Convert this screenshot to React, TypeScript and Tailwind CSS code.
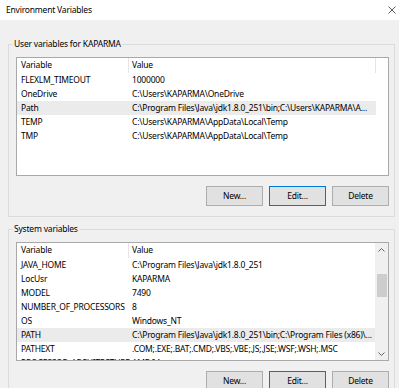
import React from "react";

type Row = [string, string];

const userVars: Row[] = [
  ["FLEXLM_TIMEOUT", "1000000"],
  ["OneDrive", "C:\\Users\\KAPARMA\\OneDrive"],
  ["Path", "C:\\Program Files\\Java\\jdk1.8.0_251\\bin;C:\\Users\\KAPARMA\\A..."],
  ["TEMP", "C:\\Users\\KAPARMA\\AppData\\Local\\Temp"],
  ["TMP", "C:\\Users\\KAPARMA\\AppData\\Local\\Temp"],
];

const systemVars: Row[] = [
  ["JAVA_HOME", "C:\\Program Files\\Java\\jdk1.8.0_251"],
  ["LocUsr", "KAPARMA"],
  ["MODEL", "7490"],
  ["NUMBER_OF_PROCESSORS", "8"],
  ["OS", "Windows_NT"],
  ["PATH", "C:\\Program Files\\Java\\jdk1.8.0_251\\bin;C:\\Program Files (x86)\\..."],
  ["PATHEXT", ".COM;.EXE;.BAT;.CMD;.VBS;.VBE;.JS;.JSE;.WSF;.WSH;.MSC"],
  ["PROCESSOR_ARCHITECTURE", "AMD64"],
];

function Buttons() {
  return (
    <div className="flex justify-end gap-[6px] pr-[5px] mt-[10px]">
      <button className="w-[57px] h-[20px] bg-[#e1e1e1] border border-[#adadad] leading-none">New...</button>
      <button className="w-[57px] h-[20px] bg-[#e1e1e1] border border-[#0078d7] leading-none">Edit...</button>
      <button className="w-[57px] h-[20px] bg-[#e1e1e1] border border-[#adadad] leading-none">Delete</button>
    </div>
  );
}

function VarList({ rows, selected, scroll }: { rows: Row[]; selected: number; scroll?: boolean }) {
  return (
    <div className="flex w-[373px] h-[119px] border border-[#a9a9a9] bg-white overflow-hidden">
      <div className="flex-1 overflow-hidden">
        <div className="flex h-[15px] items-center">
          <div className="w-[111px] pl-[4px] shrink-0">Variable</div>
          <div className="w-px h-full bg-[#e5e5e5]" />
          <div className="flex-1 pl-[3px]">Value</div>
          {!scroll && <div className="w-px h-full bg-[#e5e5e5] mr-[12px]" />}
        </div>
        {rows.map((r, i) => (
          <div
            key={r[0]}
            className={`flex h-[14px] items-center whitespace-nowrap ${i === selected ? "bg-[#ebebeb]" : ""} ${scroll ? "" : "mr-[12px]"}`}
          >
            <div className="w-[115px] pl-[4px] shrink-0 overflow-hidden">{r[0]}</div>
            <div className="flex-1 overflow-hidden">{r[1]}</div>
          </div>
        ))}
      </div>
      {scroll && (
        <div className="w-[13px] shrink-0 bg-[#f0f0f0] flex flex-col items-center">
          <div className="h-[13px] flex items-center justify-center">
            <svg width="7" height="4" viewBox="0 0 7 4"><path d="M0.5 3.5 L3.5 0.5 L6.5 3.5" fill="none" stroke="#606060" /></svg>
          </div>
          <div className="w-[10px] h-[23px] bg-[#cdcdcd] mt-[18px]" />
          <div className="flex-1" />
          <div className="h-[13px] flex items-center justify-center">
            <svg width="7" height="4" viewBox="0 0 7 4"><path d="M0.5 0.5 L3.5 3.5 L6.5 0.5" fill="none" stroke="#606060" /></svg>
          </div>
        </div>
      )}
    </div>
  );
}

function Group({ label, children, className }: { label: string; children: React.ReactNode; className?: string }) {
  return (
    <div className={`relative w-[387px] border border-[#dcdcdc] pl-[7px] pt-[12px] pb-[10px] ${className ?? ""}`}>
      <span className="absolute -top-[7px] left-[4px] px-px bg-[#f0f0f0] leading-[12px]">{label}</span>
      {children}
    </div>
  );
}

export default function App() {
  return (
    <div className="w-[399px] h-[388px] overflow-hidden bg-[#f0f0f0] text-black text-[8.5px] tracking-[-0.2px] font-['Noto_Sans',sans-serif]">
      <div className="h-[20px] bg-white flex items-center justify-between pl-[6px] pr-[3px]">
        <span>Environment Variables</span>
        <svg width="8" height="8" viewBox="0 0 8 8">
          <path d="M0.5 0.5 L7.5 7.5 M7.5 0.5 L0.5 7.5" stroke="#333" strokeWidth="0.8" />
        </svg>
      </div>
      <div className="pl-[8px] pt-[24px]">
        <Group label="User variables for KAPARMA">
          <VarList rows={userVars} selected={2} />
          <Buttons />
        </Group>
        <Group label="System variables" className="mt-[12px]">
          <VarList rows={systemVars} selected={5} scroll />
          <Buttons />
        </Group>
      </div>
    </div>
  );
}
